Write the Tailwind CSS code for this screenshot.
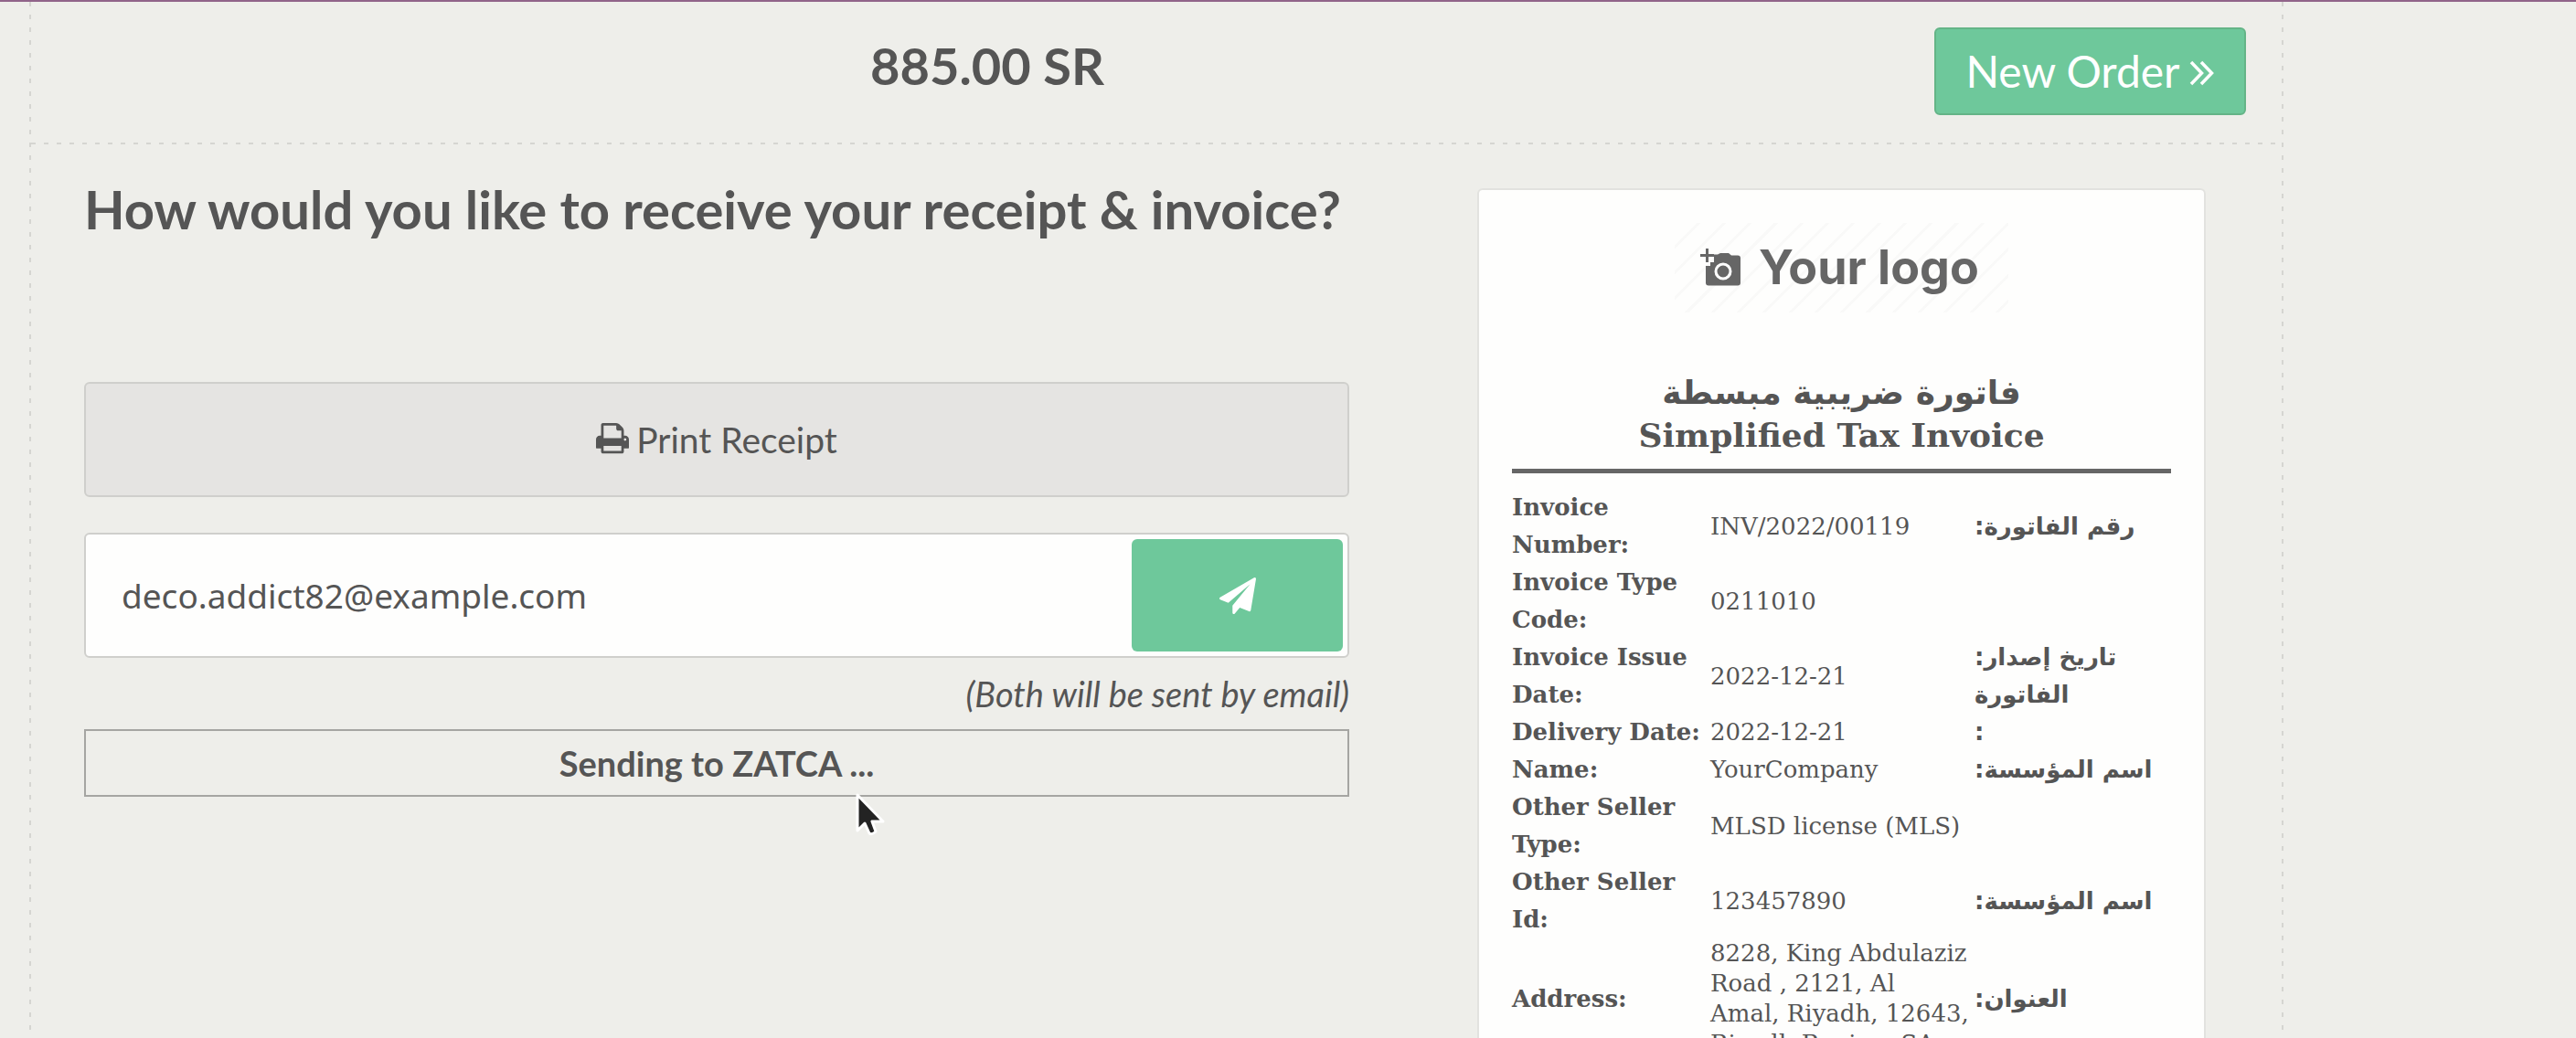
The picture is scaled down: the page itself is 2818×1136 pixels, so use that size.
<!DOCTYPE html>
<html lang="en">
<head>
<meta charset="utf-8">
<title>Receipt</title>
<script src="https://cdn.jsdelivr.net/npm/@tailwindcss/browser@4"></script>
</head>
<body class="h-screen overflow-hidden bg-[#eeeeea] font-['Lato',sans-serif] text-[#555555]">
<div class="flex h-full flex-col border-t-2 border-[#91648a]">
  <main class="ml-8 mr-80 flex min-h-0 flex-1">
    <div class="w-0.5 shrink-0 bg-[repeating-linear-gradient(to_bottom,#d5d5d1_0_5px,transparent_5px_14px)]"></div>
    <div class="flex min-w-0 flex-1 flex-col">
      <header class="flex h-[154px] shrink-0 items-start pr-[39px] pt-7">
        <div class="flex-1 pl-2.5 pt-2 text-center text-[56px] leading-[68px] font-bold">885.00 SR</div>
        <button class="flex h-24 w-[341px] items-center justify-center gap-2.5 rounded-md border-2 border-[#64b487] bg-[#6ec89b] text-[48px] leading-none text-white">
          New Order
          <svg class="mt-1 h-7 w-7" viewBox="0 0 28 28" fill="none" stroke="currentColor" stroke-width="3.5" aria-hidden="true"><path d="M2 2l11.500 12L2 26M13 2l11.500 12L13 26"/></svg>
        </button>
      </header>
      <div class="h-0.5 shrink-0 bg-[repeating-linear-gradient(to_right,#d5d5d1_0_5px,transparent_5px_14px)]"></div>
      <div class="flex min-h-0 flex-1 items-start gap-[140px] pl-[58px] pr-[83px]">
        <section class="min-w-0 flex-1 pt-[37px]">
          <h1 class="mb-[155px] text-[58px] leading-[68px] font-bold whitespace-nowrap">How would you like to receive your receipt &amp; invoice?</h1>
          <button class="mb-[39px] flex h-[126px] w-full items-center justify-center gap-2 rounded-md border-2 border-[#cfcfcc] bg-[#e5e4e2] text-[39px] leading-none">
            <svg class="h-9 w-9" viewBox="0 0 1664 1664" fill="currentColor" aria-hidden="true"><path d="M384 1408h896v-256H384v256zm0-640h896V384h-160q-40 0-68-28t-28-68V128H384v640zm1152 64q0-26-19-45t-45-19-45 19-19 45 19 45 45 19 45-19 19-45zm128 0v416q0 13-9.500 22.500t-22.500 9.500h-224v160q0 40-28 68t-68 28H352q-40 0-68-28t-28-68v-160H32q-13 0-22.500-9.500T0 1248V832q0-79 56.500-135.500T192 640h64V96q0-40 28-68t68-28h672q40 0 88 20t76 48l152 152q28 28 48 76t20 88v256h64q79 0 135.500 56.500T1664 832z"/></svg>
            Print Receipt
          </button>
          <form class="flex h-[137px] rounded-md border-2 border-[#cfcfcc] bg-[#fefefd] p-[5px]">
            <input type="email" aria-label="Email address" value="deco.addict82@example.com" class="min-w-0 flex-1 pl-[34px] font-['Noto_Sans',sans-serif] text-[37px] outline-none">
            <button type="button" aria-label="Send by email" class="flex w-[231px] items-center justify-center rounded-md bg-[#6ec89b] text-white">
              <svg class="h-10 w-10" viewBox="0 0 1792 1792" fill="currentColor" aria-hidden="true"><path d="M1764 11q33 24 27 64l-256 1536q-5 29-32 45-14 8-31 8-11 0-24-5l-453-185-242 295q-18 23-49 23-13 0-22-4-19-7-30.500-23.500T640 1728v-349l864-1059-1069 925-395-162q-37-14-40-55-2-40 32-59L1696 9q15-9 32-9 20 0 36 11z"/></svg>
            </button>
          </form>
          <p class="mt-4 mb-4 text-right text-[38px] leading-[46px] italic">(Both will be sent by email)</p>
          <div class="relative flex h-[74px] items-center justify-center border-2 border-[#a5a5a2] text-[38px] leading-none font-bold">
            Sending to ZATCA ...
            <svg class="absolute top-[67px] left-[61%] h-12 w-8" viewBox="0 0 32 48" aria-hidden="true"><path d="M2 3v39l8-8 5 11q3 2 7-2l-4-11h12z" fill="#232323" stroke="#fff" stroke-width="3" stroke-linejoin="round"/></svg>
          </div>
        </section>
        <article class="mt-12 w-[797px] shrink-0 rounded-md border-2 border-[#e2e2df] bg-[#fefefd] px-9 pt-9 pb-12 font-['DejaVu_Serif','DejaVu_Sans',serif]">
          <div class="mx-auto mb-16 flex h-[98px] w-[365px] items-center gap-5 bg-[repeating-linear-gradient(135deg,transparent_0_17px,#f9f9f8_17px_20px)] pl-7 font-['Inter',sans-serif] text-[52px] leading-none font-bold whitespace-nowrap text-[#666666]">
            <svg class="h-11 w-11 shrink-0" viewBox="0 0 44 44" aria-hidden="true"><path d="M15 7.500h4l3-1.500h9l3 2.500h7q3 0 3 3v27q0 3-3 3H9q-3 0-3-3V20h5v-4h4z" fill="currentColor"/><path d="M7.500 1v15M0 8.500h15" stroke="currentColor" stroke-width="3"/><circle cx="25" cy="26" r="8" fill="none" stroke="#fff" stroke-width="3"/></svg>
            Your logo
          </div>
          <h2 class="text-center text-[36px] leading-[46px] font-bold"><span dir="rtl" lang="ar" class="font-['DejaVu_Sans',sans-serif]">فاتورة ضريبية مبسطة</span><br>Simplified Tax Invoice</h2>
          <hr class="mt-3.5 mb-[17px] border-t-[5px] border-[#666666]">
          <table class="w-full table-fixed border-collapse text-left text-[26px] leading-[33px]">
            <colgroup><col class="w-[217px]"><col class="w-[289px]"><col></colgroup>
            <tbody>
              <tr><th scope="row" class="p-0 leading-[41px] font-bold">Invoice Number:</th><td class="p-0">INV/2022/00119</td><td dir="rtl" lang="ar" class="p-0 text-left font-['DejaVu_Sans',sans-serif] leading-[41px] font-bold">رقم الفاتورة:</td></tr>
              <tr><th scope="row" class="p-0 leading-[41px] font-bold">Invoice Type Code:</th><td class="p-0">0211010</td><td class="p-0"></td></tr>
              <tr><th scope="row" class="p-0 leading-[41px] font-bold">Invoice Issue Date:</th><td class="p-0">2022-12-21</td><td dir="rtl" lang="ar" class="p-0 text-left font-['DejaVu_Sans',sans-serif] leading-[41px] font-bold">تاريخ إصدار:<br>الفاتورة</td></tr>
              <tr><th scope="row" class="p-0 leading-[41px] font-bold whitespace-nowrap">Delivery Date:</th><td class="p-0">2022-12-21</td><td dir="rtl" lang="ar" class="p-0 text-left font-['DejaVu_Sans',sans-serif] leading-[41px] font-bold">:</td></tr>
              <tr><th scope="row" class="p-0 leading-[41px] font-bold">Name:</th><td class="p-0">YourCompany</td><td dir="rtl" lang="ar" class="p-0 text-left font-['DejaVu_Sans',sans-serif] leading-[41px] font-bold">اسم المؤسسة:</td></tr>
              <tr><th scope="row" class="p-0 leading-[41px] font-bold">Other Seller Type:</th><td class="p-0">MLSD license (MLS)</td><td class="p-0"></td></tr>
              <tr><th scope="row" class="p-0 leading-[41px] font-bold">Other Seller<br>Id:</th><td class="p-0">123457890</td><td dir="rtl" lang="ar" class="p-0 text-left font-['DejaVu_Sans',sans-serif] leading-[41px] font-bold">اسم المؤسسة:</td></tr>
              <tr><th scope="row" class="p-0 leading-[41px] font-bold">Address:</th><td class="p-0 whitespace-nowrap">8228, King Abdulaziz<br>Road , 2121, Al<br>Amal, Riyadh, 12643,<br>Riyadh Region, SA</td><td dir="rtl" lang="ar" class="p-0 text-left font-['DejaVu_Sans',sans-serif] leading-[41px] font-bold">العنوان:</td></tr>
            </tbody>
          </table>
        </article>
      </div>
    </div>
    <div class="w-0.5 shrink-0 bg-[repeating-linear-gradient(to_bottom,#d5d5d1_0_5px,transparent_5px_14px)]"></div>
  </main>
</div>
</body>
</html>
